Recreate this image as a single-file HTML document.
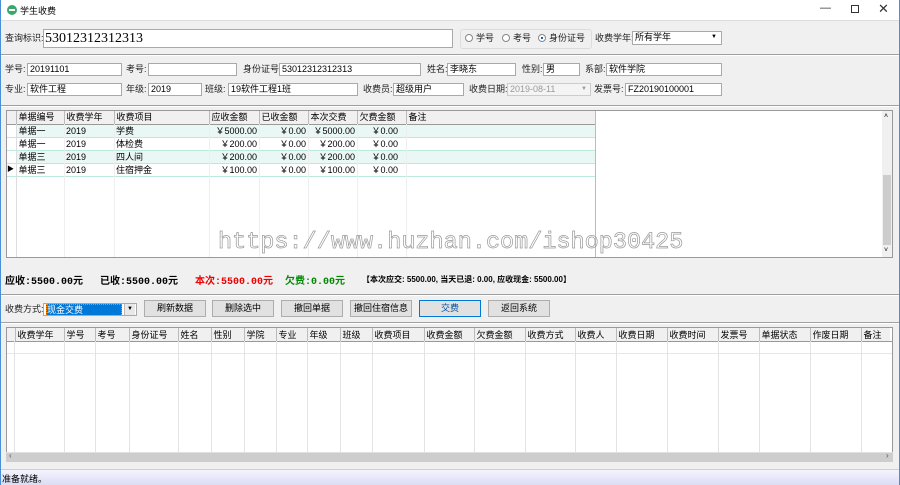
<!DOCTYPE html>
<html><head><meta charset="utf-8"><style>
*{box-sizing:border-box;margin:0;padding:0}
body{width:900px;height:485px;overflow:hidden;background:#f0f0f0;font-family:"Liberation Sans","Noto Sans CJK SC",sans-serif;font-size:9px;color:#000;position:relative}
.a{position:absolute;white-space:nowrap}
.in{position:absolute;background:#fff;border:1px solid #a9a9a9;height:13px;font-size:9px;line-height:11px;padding-left:2px;white-space:nowrap;overflow:hidden}
.lb{position:absolute;font-size:9px;line-height:13px;color:#222}
.sep{position:absolute;left:1px;right:1px;height:2px;border-top:1px solid #a0a0a0;border-bottom:1px solid #fff}
.btn{position:absolute;top:300px;height:17px;width:62px;background:#e1e1e1;border:1px solid #adadad;text-align:center;line-height:15px;font-size:9px}
table{border-collapse:collapse;table-layout:fixed}
td{font-size:9px;height:13px;line-height:12px;padding:0 2px;white-space:nowrap;overflow:hidden}
</style></head><body>
<div class="a" style="left:0;top:0;width:900px;height:21px;background:#fff;border-bottom:1px solid #ddd"></div>
<div class="a" style="left:7px;top:5px;width:10px;height:10px;border-radius:50%;background:#3aa86b"></div>
<div class="a" style="left:9px;top:9px;width:6px;height:2px;background:#fff"></div>
<div class="a" style="left:20px;top:4px;font-size:9px">学生收费</div>
<div class="a" style="left:820px;top:2px;font-size:11px;color:#333">—</div>
<div class="a" style="left:851px;top:5px;width:8px;height:8px;border:1px solid #333"></div>
<div class="a" style="left:878px;top:1px;font-size:13px;color:#333">✕</div>
<div class="a" style="left:0;top:0;width:1px;height:485px;background:#4a90d9"></div>
<div class="a" style="left:899px;top:0;width:1px;height:485px;background:#4a90d9"></div>

<div class="lb" style="left:5px;top:32px">查询标识:</div>
<div class="in" style="left:43px;top:29px;width:410px;height:19px;font-family:'Liberation Serif',serif;font-size:14px;line-height:17px;padding-left:1px">53012312312313</div>
<div class="a" style="left:460px;top:29px;width:132px;height:20px;border:1px solid #dcdcdc;border-radius:3px"></div>
<div class="a" style="left:465px;top:34px;width:8px;height:8px;border:1px solid #888;border-radius:50%;background:#fff"></div>
<div class="lb" style="left:476px;top:32px">学号</div>
<div class="a" style="left:502px;top:34px;width:8px;height:8px;border:1px solid #888;border-radius:50%;background:#fff"></div>
<div class="lb" style="left:513px;top:32px">考号</div>
<div class="a" style="left:538px;top:34px;width:8px;height:8px;border:1px solid #888;border-radius:50%;background:#fff"></div>
<div class="a" style="left:541px;top:37px;width:2px;height:2px;background:#1060c0"></div>
<div class="lb" style="left:549px;top:32px">身份证号</div>
<div class="lb" style="left:595px;top:32px">收费学年:</div>
<div class="in" style="left:632px;top:31px;width:90px;height:14px">所有学年<span style="position:absolute;right:4px;top:0;font-size:6px">▼</span></div>
<div class="sep" style="top:54px"></div>

<div class="lb" style="left:5px;top:63px">学号:</div><div class="in" style="left:27px;top:63px;width:95px">20191101</div>
<div class="lb" style="left:126px;top:63px">考号:</div><div class="in" style="left:148px;top:63px;width:89px"></div>
<div class="lb" style="left:243px;top:63px">身份证号:</div><div class="in" style="left:279px;top:63px;width:142px">53012312312313</div>
<div class="lb" style="left:427px;top:63px">姓名:</div><div class="in" style="left:447px;top:63px;width:69px">李晓东</div>
<div class="lb" style="left:522px;top:63px">性别:</div><div class="in" style="left:543px;top:63px;width:37px">男</div>
<div class="lb" style="left:585px;top:63px">系部:</div><div class="in" style="left:606px;top:63px;width:116px">软件学院</div>

<div class="lb" style="left:5px;top:83px">专业:</div><div class="in" style="left:27px;top:83px;width:95px">软件工程</div>
<div class="lb" style="left:126px;top:83px">年级:</div><div class="in" style="left:148px;top:83px;width:54px">2019</div>
<div class="lb" style="left:205px;top:83px">班级:</div><div class="in" style="left:228px;top:83px;width:130px">19软件工程1班</div>
<div class="lb" style="left:363px;top:83px">收费员:</div><div class="in" style="left:393px;top:83px;width:71px">超级用户</div>
<div class="lb" style="left:469px;top:83px">收费日期:</div><div class="in" style="left:507px;top:83px;width:84px;background:#f4f4f4;border-color:#ccc;color:#999">2019-08-11<span style="position:absolute;right:3px;font-size:6px">▼</span></div>
<div class="lb" style="left:594px;top:83px">发票号:</div><div class="in" style="left:625px;top:83px;width:97px">FZ20190100001</div>
<div class="sep" style="top:105px"></div>

<!-- top grid -->
<div class="a" style="left:6px;top:110px;width:887px;height:148px;background:#fff;border:1px solid #999"></div>
<div class="a" style="left:882px;top:111px;width:10px;height:146px;background:#f0f0f0"></div>
<div class="a" style="left:883px;top:175px;width:8px;height:70px;background:#cdcdcd"></div>
<div class="a" style="left:884px;top:113px;font-size:7px">˄</div>
<div class="a" style="left:884px;top:247px;font-size:7px">˅</div>
<table class="a" style="left:7px;top:111px">
<colgroup><col style="width:9px"><col style="width:48px"><col style="width:50px"><col style="width:95px"><col style="width:50px"><col style="width:49px"><col style="width:49px"><col style="width:49px"><col style="width:189px"></colgroup>
<tr style="background:#f0f0f0"><td style="border-right:1px solid #bbb;border-bottom:1px solid #999"></td><td style="border-right:1px solid #bbb;border-bottom:1px solid #999">单据编号</td><td style="border-right:1px solid #bbb;border-bottom:1px solid #999">收费学年</td><td style="border-right:1px solid #bbb;border-bottom:1px solid #999">收费项目</td><td style="border-right:1px solid #bbb;border-bottom:1px solid #999">应收金额</td><td style="border-right:1px solid #bbb;border-bottom:1px solid #999">已收金额</td><td style="border-right:1px solid #bbb;border-bottom:1px solid #999">本次交费</td><td style="border-right:1px solid #bbb;border-bottom:1px solid #999">欠费金额</td><td style="border-right:1px solid #888;border-bottom:1px solid #999">备注</td></tr>
<tr style="background:#eaf8f5"><td style="background:#fff;border-right:1px solid #bbb"></td><td>单据一</td><td>2019</td><td>学费</td><td style="text-align:right">￥5000.00</td><td style="text-align:right">￥0.00</td><td style="text-align:right">￥5000.00</td><td style="text-align:right;padding-right:8px">￥0.00</td><td></td></tr>
<tr style="background:#fff;border-top:1px solid #bde8de"><td style="border-right:1px solid #bbb"></td><td>单据一</td><td>2019</td><td>体检费</td><td style="text-align:right">￥200.00</td><td style="text-align:right">￥0.00</td><td style="text-align:right">￥200.00</td><td style="text-align:right;padding-right:8px">￥0.00</td><td></td></tr>
<tr style="background:#eaf8f5;border-top:1px solid #bde8de"><td style="background:#fff;border-right:1px solid #bbb"></td><td>单据三</td><td>2019</td><td>四人间</td><td style="text-align:right">￥200.00</td><td style="text-align:right">￥0.00</td><td style="text-align:right">￥200.00</td><td style="text-align:right;padding-right:8px">￥0.00</td><td></td></tr>
<tr style="background:#fff;border-top:1px solid #bde8de;border-bottom:1px solid #bde8de"><td style="border-right:1px solid #bbb;font-size:7px;padding:0">▶</td><td>单据三</td><td>2019</td><td>住宿押金</td><td style="text-align:right">￥100.00</td><td style="text-align:right">￥0.00</td><td style="text-align:right">￥100.00</td><td style="text-align:right;padding-right:8px">￥0.00</td><td></td></tr>
</table>
<div class="a" style="left:16px;top:124px;width:1px;height:133px;background:#ddd"></div>
<div class="a" style="left:64px;top:124px;width:1px;height:133px;background:#eee"></div>
<div class="a" style="left:114px;top:124px;width:1px;height:133px;background:#eee"></div>
<div class="a" style="left:209px;top:124px;width:1px;height:133px;background:#eee"></div>
<div class="a" style="left:259px;top:124px;width:1px;height:133px;background:#eee"></div>
<div class="a" style="left:308px;top:124px;width:1px;height:133px;background:#eee"></div>
<div class="a" style="left:357px;top:124px;width:1px;height:133px;background:#eee"></div>
<div class="a" style="left:406px;top:124px;width:1px;height:133px;background:#eee"></div>
<div class="a" style="left:595px;top:111px;width:1px;height:146px;background:#bbb"></div>
<div class="a" style="left:218px;top:229px;font-family:'Liberation Mono',monospace;font-size:23.5px;color:transparent;-webkit-text-stroke:0.7px #999">https://www.huzhan.com/ishop30425</div>

<div class="a" style="left:5px;top:272px;font-size:10px;font-weight:bold;font-family:'Liberation Mono','Noto Sans CJK SC',monospace">应收:5500.00元</div>
<div class="a" style="left:100px;top:272px;font-size:10px;font-weight:bold;font-family:'Liberation Mono','Noto Sans CJK SC',monospace">已收:5500.00元</div>
<div class="a" style="left:195px;top:272px;font-size:10px;font-weight:bold;color:#e00;font-family:'Liberation Mono','Noto Sans CJK SC',monospace">本次:5500.00元</div>
<div class="a" style="left:285px;top:272px;font-size:10px;font-weight:bold;color:#080;font-family:'Liberation Mono','Noto Sans CJK SC',monospace">欠费:0.00元</div>
<div class="a" style="left:362px;top:274px;font-size:8px;font-weight:bold">【本次应交: 5500.00, 当天已退: 0.00, 应收现金: 5500.00】</div>
<div class="sep" style="top:294px"></div>

<div class="lb" style="left:5px;top:303px">收费方式:</div>
<div class="in" style="left:43px;top:303px;width:94px"><span style="background:#0078d7;color:#fff;display:inline-block;width:76px;border:1px dotted #f80">现金交费</span><span style="position:absolute;right:1px;top:0;width:11px;height:11px;background:#e8e8e8;border-left:1px solid #bbb;font-size:6px;text-align:center">▼</span></div>
<div class="btn" style="left:144px">刷新数据</div>
<div class="btn" style="left:212px">删除选中</div>
<div class="btn" style="left:281px">撤回单据</div>
<div class="btn" style="left:350px">撤回住宿信息</div>
<div class="btn" style="left:419px;border:1px solid #0078d7;color:#0050a0">交费</div>
<div class="btn" style="left:488px">返回系统</div>
<div class="sep" style="top:322px"></div>

<!-- bottom grid -->
<div class="a" style="left:6px;top:327px;width:887px;height:135px;background:#fff;border:1px solid #999"></div>
<table class="a" style="left:7px;top:328px">
<colgroup><col style="width:8px"><col style="width:49px"><col style="width:31px"><col style="width:34px"><col style="width:49px"><col style="width:33px"><col style="width:33px"><col style="width:32px"><col style="width:31px"><col style="width:33px"><col style="width:32px"><col style="width:52px"><col style="width:50px"><col style="width:51px"><col style="width:50px"><col style="width:41px"><col style="width:51px"><col style="width:51px"><col style="width:41px"><col style="width:51px"><col style="width:51px"><col style="width:29px"></colgroup>
<tr style="background:#f0f0f0"><td style="border-right:1px solid #bbb"></td><td style="border-right:1px solid #bbb">收费学年</td><td style="border-right:1px solid #bbb">学号</td><td style="border-right:1px solid #bbb">考号</td><td style="border-right:1px solid #bbb">身份证号</td><td style="border-right:1px solid #bbb">姓名</td><td style="border-right:1px solid #bbb">性别</td><td style="border-right:1px solid #bbb">学院</td><td style="border-right:1px solid #bbb">专业</td><td style="border-right:1px solid #bbb">年级</td><td style="border-right:1px solid #bbb">班级</td><td style="border-right:1px solid #bbb">收费项目</td><td style="border-right:1px solid #bbb">收费金额</td><td style="border-right:1px solid #bbb">欠费金额</td><td style="border-right:1px solid #bbb">收费方式</td><td style="border-right:1px solid #bbb">收费人</td><td style="border-right:1px solid #bbb">收费日期</td><td style="border-right:1px solid #bbb">收费时间</td><td style="border-right:1px solid #bbb">发票号</td><td style="border-right:1px solid #bbb">单据状态</td><td style="border-right:1px solid #bbb">作废日期</td><td>备注</td></tr>
</table>
<div class="a" style="left:7px;top:341px;width:885px;height:1px;background:#999"></div>
<div class="a" style="left:7px;top:353px;width:885px;height:1px;background:#d5eee8"></div>
<div class="a" style="left:6px;top:452px;width:887px;height:10px;background:#cdcdcd;border-top:1px solid #e0e0e0"></div>
<div class="a" style="left:9px;top:451px;font-size:8px;color:#555">‹</div>
<div class="a" style="left:886px;top:451px;font-size:8px;color:#555">›</div>
<div class="a" style="left:14px;top:341px;width:1px;height:111px;background:#e3e3e3"></div>
<div class="a" style="left:64px;top:341px;width:1px;height:111px;background:#e3e3e3"></div>
<div class="a" style="left:95px;top:341px;width:1px;height:111px;background:#e3e3e3"></div>
<div class="a" style="left:129px;top:341px;width:1px;height:111px;background:#e3e3e3"></div>
<div class="a" style="left:178px;top:341px;width:1px;height:111px;background:#e3e3e3"></div>
<div class="a" style="left:211px;top:341px;width:1px;height:111px;background:#e3e3e3"></div>
<div class="a" style="left:244px;top:341px;width:1px;height:111px;background:#e3e3e3"></div>
<div class="a" style="left:276px;top:341px;width:1px;height:111px;background:#e3e3e3"></div>
<div class="a" style="left:307px;top:341px;width:1px;height:111px;background:#e3e3e3"></div>
<div class="a" style="left:340px;top:341px;width:1px;height:111px;background:#e3e3e3"></div>
<div class="a" style="left:372px;top:341px;width:1px;height:111px;background:#e3e3e3"></div>
<div class="a" style="left:424px;top:341px;width:1px;height:111px;background:#e3e3e3"></div>
<div class="a" style="left:474px;top:341px;width:1px;height:111px;background:#e3e3e3"></div>
<div class="a" style="left:525px;top:341px;width:1px;height:111px;background:#e3e3e3"></div>
<div class="a" style="left:575px;top:341px;width:1px;height:111px;background:#e3e3e3"></div>
<div class="a" style="left:616px;top:341px;width:1px;height:111px;background:#e3e3e3"></div>
<div class="a" style="left:667px;top:341px;width:1px;height:111px;background:#e3e3e3"></div>
<div class="a" style="left:718px;top:341px;width:1px;height:111px;background:#e3e3e3"></div>
<div class="a" style="left:759px;top:341px;width:1px;height:111px;background:#e3e3e3"></div>
<div class="a" style="left:810px;top:341px;width:1px;height:111px;background:#e3e3e3"></div>
<div class="a" style="left:861px;top:341px;width:1px;height:111px;background:#e3e3e3"></div>

<div class="a" style="left:1px;top:469px;width:898px;height:16px;background:linear-gradient(#f4f4ff,#dcdcf4);border-top:1px solid #ccd"></div>
<div class="a" style="left:2px;top:472px;font-size:9px">准备就绪。</div>
</body></html>
